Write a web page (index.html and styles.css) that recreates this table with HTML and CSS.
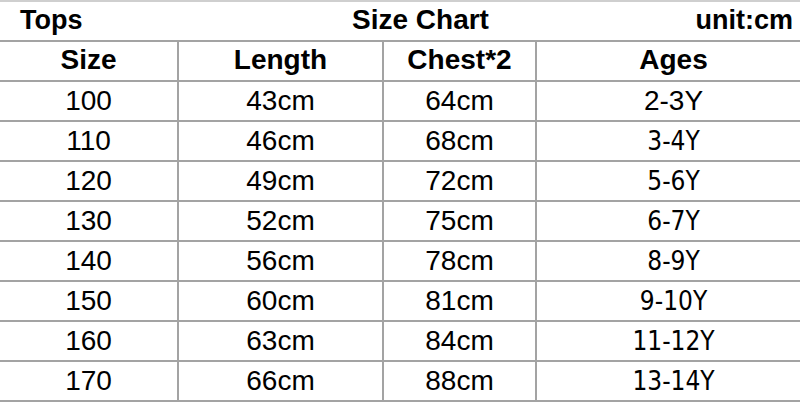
FILE: index.html
```html
<!DOCTYPE html>
<html>
<head>
<meta charset="utf-8">
<link rel="stylesheet" href="styles.css">
</head>
<body>
<div class="sheet">
  <div class="title">
    <span class="t-left">Tops</span>
    <span class="t-mid">Size Chart</span>
    <span class="t-right">unit:cm</span>
  </div>
  <div class="grid">
    <div class="cell head">Size</div>
    <div class="cell head">Length</div>
    <div class="cell head">Chest*2</div>
    <div class="cell head age">Ages</div>

    <div class="cell">100</div><div class="cell">43cm</div><div class="cell">64cm</div><div class="cell age">2-3Y</div>
    <div class="cell">110</div><div class="cell">46cm</div><div class="cell">68cm</div><div class="cell age alt">3-4Y</div>
    <div class="cell">120</div><div class="cell">49cm</div><div class="cell">72cm</div><div class="cell age alt">5-6Y</div>
    <div class="cell">130</div><div class="cell">52cm</div><div class="cell">75cm</div><div class="cell age alt">6-7Y</div>
    <div class="cell">140</div><div class="cell">56cm</div><div class="cell">78cm</div><div class="cell age alt">8-9Y</div>
    <div class="cell">150</div><div class="cell">60cm</div><div class="cell">81cm</div><div class="cell age alt">9-10Y</div>
    <div class="cell">160</div><div class="cell">63cm</div><div class="cell">84cm</div><div class="cell age alt">11-12Y</div>
    <div class="cell">170</div><div class="cell">66cm</div><div class="cell">88cm</div><div class="cell age alt">13-14Y</div>
  </div>
</div>
</body>
</html>
```

FILE: styles.css
```css
html, body {
  margin: 0;
  padding: 0;
  background: #ffffff;
}

body {
  width: 800px;
  height: 402px;
  overflow: hidden;
  font-family: "Liberation Sans", Arial, Helvetica, sans-serif;
  color: #000000;
}

.sheet {
  width: 800px;
  border-top: 2px solid #cfcfcf;
}

.title {
  display: grid;
  grid-template-columns: 332px auto 1fr;
  align-items: center;
  height: 38px;
  padding: 0 7px 3px 20px;
  box-sizing: border-box;
  height: 38px;
  border-bottom: 2px solid #a3a3a3;
  font-weight: bold;
  font-size: 27px;
  line-height: 32px;
}

.title {
  height: 40px;
}

.t-mid {
  font-size: 28px;
}

.t-right {
  text-align: right;
}

.grid {
  display: grid;
  grid-template-columns: 177px 203px 151px 263px;
  grid-auto-rows: 38px;
  column-gap: 2px;
  row-gap: 2px;
  padding-bottom: 2px;
  background: #a3a3a3;
}

.cell {
  background: #ffffff;
  display: flex;
  align-items: center;
  justify-content: center;
  font-size: 28px;
  line-height: 32px;
}

.head {
  font-weight: bold;
  padding-bottom: 3px;
}

.age {
  padding-left: 10px;
}

.alt {
  font-family: "DejaVu Sans", Verdana, sans-serif;
  font-stretch: condensed;
  font-size: 26px;
}
```
